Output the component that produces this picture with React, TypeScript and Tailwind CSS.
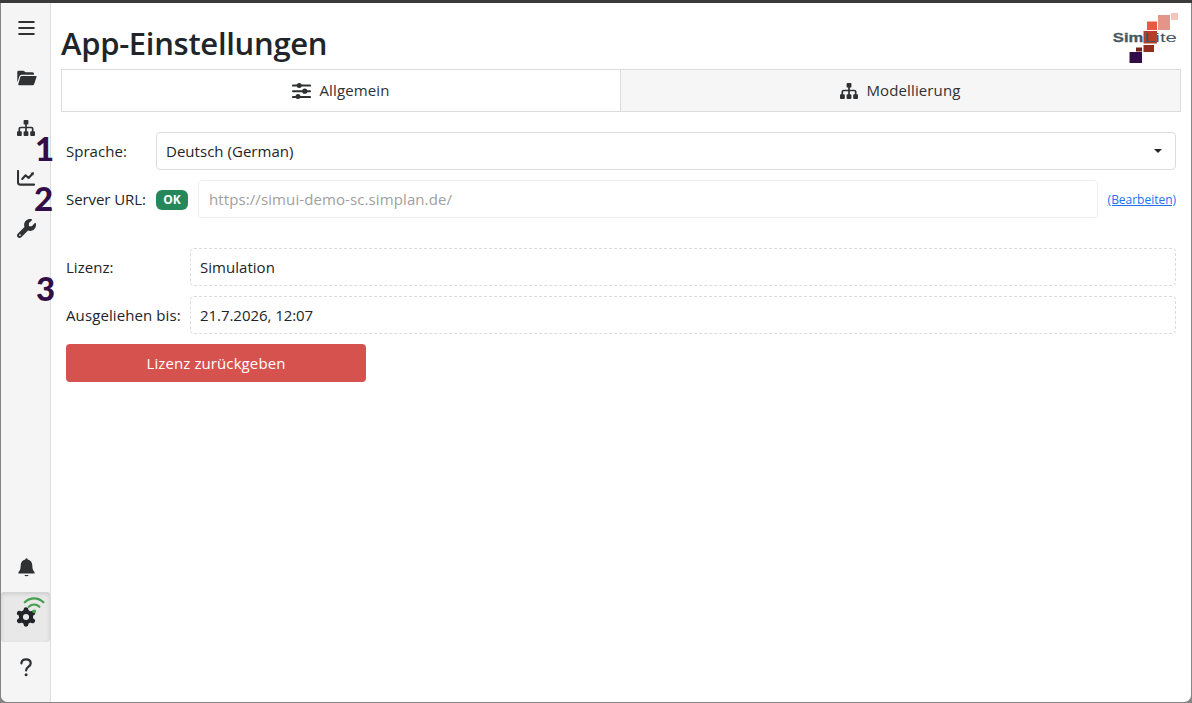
import React from "react";
import { FaWrench } from "react-icons/fa6";
import clsx from "clsx";

const SitemapIcon: React.FC = () => (
    <svg width="18" height="16" viewBox="0 0 18 16" fill="currentColor">
        <rect x="6.600" y="0" width="4.800" height="4.600" rx="0.900" />
        <rect x="0" y="11.200" width="4.800" height="4.800" rx="0.900" />
        <rect x="6.600" y="11.200" width="4.800" height="4.800" rx="0.900" />
        <rect x="13.200" y="11.200" width="4.800" height="4.800" rx="0.900" />
        <path d="M9 4v8M2.300 12V8.800q0-1.300 1.300-1.300h10.800q1.300 0 1.300 1.300V12" fill="none" stroke="currentColor" strokeWidth="1.700" />
    </svg>
);

const SlidersIcon: React.FC = () => (
    <svg width="19" height="16" viewBox="0 0 19 16" fill="currentColor">
        <path d="M1 2.500h17M1 8.200h17M1 14h17" stroke="currentColor" strokeWidth="2.100" strokeLinecap="round" />
        <circle cx="7.200" cy="2.500" r="2.500" />
        <circle cx="12.800" cy="8.200" r="2.600" />
        <circle cx="6" cy="13.500" r="2.500" />
    </svg>
);

const BarsIcon: React.FC = () => (
    <svg className="relative left-[0.5px]" width="17" height="14" viewBox="0 0 17 14" stroke="currentColor" strokeWidth="2" strokeLinecap="round">
        <path d="M1.200 1h14.600M1.200 7h14.600M1.200 13h14.600" />
    </svg>
);

const FolderIcon: React.FC = () => (
    <svg className="relative left-px" width="20" height="16" viewBox="0 0 20 16" fill="currentColor">
        <path d="M.300 12.500V2Q.300.700 1.600.700h4.600q.800 0 1.400.700l.900.900h7q1.500 0 1.500 1.500v1H4.600q-1.400 0-2 1.300z" />
        <path d="M4.600 6h14.200q1.100 0 .700 1.100l-2.300 6.900q-.400 1.200-1.600 1.200H2.200q-1.300 0-.900-1.200L3.300 7q.300-1 1.300-1z" />
    </svg>
);

const ChartIcon: React.FC = () => (
    <svg width="18" height="16" viewBox="0 0 18 16" fill="none" stroke="currentColor" strokeWidth="2.100" strokeLinecap="round" strokeLinejoin="round">
        <path d="M1 1v11.600q0 2 2 2h14" />
        <path d="M5.200 9l3.400-3.700 3 2.700 4.400-4.700" />
        <path d="M13.300 2.700h3v3z" fill="currentColor" stroke="none" />
    </svg>
);

const BellIcon: React.FC = () => (
    <svg className="relative left-[0.5px]" width="17" height="19" viewBox="0 0 17 19" fill="currentColor">
        <path d="M8.500.300q1 0 1.200 1.200c2.900.600 4.500 2.700 4.600 5.800.1 3.600.5 5.200 2.300 6.900v1.300H.400v-1.300c1.800-1.700 2.200-3.300 2.300-6.900.1-3.100 1.700-5.200 4.600-5.800Q7.500.300 8.500.300z" />
        <path d="M6.400 17h4.200q-.5 1.300-2.100 1.300T6.400 17z" />
    </svg>
);

const GearIcon: React.FC = () => (
    <svg width="20" height="20" viewBox="-10 -10 20 20" fill="none" stroke="currentColor">
        <circle r="5.100" strokeWidth="4.100" />
        <path
            d="M0-6v-1.200M0 6v1.200M5.200-3l1.400-.8M-5.200 3l-1.400.8M5.200 3l1.400.8M-5.200-3l-1.400-.8"
            strokeWidth="4.900"
            strokeLinecap="round"
        />
    </svg>
);

const QuestionIcon: React.FC = () => (
    <svg width="12" height="19" viewBox="0 0 12 19" fill="none">
        <path d="M1.400 5.300C1.600 2.800 3.400 1.400 6 1.400c2.800 0 4.700 1.500 4.700 4 0 3.200-4.600 3.300-4.600 7" stroke="currentColor" strokeWidth="2.200" strokeLinecap="round" />
        <circle cx="6.100" cy="16.800" r="1.500" fill="currentColor" />
    </svg>
);

const WifiBadge: React.FC = () => (
    <svg className="absolute top-[4px] left-[22px]" width="22" height="18" viewBox="0 0 22 18" fill="none" stroke="#43a04c" strokeWidth="2.200" strokeLinecap="round">
        <path d="M1.800 6.200C7.200 1 15.200 1 20.400 6.200" />
        <path d="M5.800 10.800C8.900 8 13.300 8 16.400 10.800" />
        <circle cx="11.200" cy="15.300" r="1.900" fill="#43a04c" stroke="none" />
    </svg>
);

const Logo: React.FC = () => (
    <svg width="68" height="52" viewBox="1112 12 68 52" role="img" aria-label="SimLite">
        <rect x="1171" y="13" width="7" height="7" fill="#f3c3bd" />
        <rect x="1158" y="15" width="12" height="15" fill="#e39589" />
        <rect x="1147" y="21.500" width="10" height="8.500" fill="#ea5840" />
        <rect x="1143.500" y="31" width="13.500" height="12.500" fill="#b83c28" />
        <rect x="1143.500" y="45" width="10.500" height="7" fill="#912c1e" />
        <rect x="1136" y="47.500" width="6" height="4" fill="#6e2219" />
        <rect x="1129.500" y="52" width="12.500" height="11" fill="#330d48" />
        <g fill="#465763" fontFamily="Liberation Sans, Arial, sans-serif" fontSize="13">
            <text x="1112.800" y="41.900" fontWeight="700" stroke="#465763" strokeWidth="0.300" textLength="30.500" lengthAdjust="spacingAndGlyphs">Sim</text>
            <text x="1144" y="41.900" textLength="33" lengthAdjust="spacingAndGlyphs">Lite</text>
        </g>
    </svg>
);

interface NavButtonProps {
    label: string;
    active?: boolean;
    children: React.ReactNode;
}

const NavButton: React.FC<NavButtonProps> = ({ label, active, children }) => (
    <button
        aria-label={label}
        className={clsx(
            "relative flex h-[50px] w-full items-center justify-center",
            active ? "rounded-[3px] bg-[#e8e8e8] text-[#212529] shadow-[inset_0_2px_4px_rgba(0,0,0,0.12)]" : "text-[#2f3133]"
        )}
    >
        {children}
    </button>
);

const Sidebar: React.FC = () => (
    <nav className="flex w-[50px] shrink-0 flex-col justify-between border-r border-[#dcdcdc] bg-[#f5f5f5] pb-[10px]">
        <div>
            <NavButton label="Menü"><BarsIcon /></NavButton>
            <NavButton label="Projekte"><FolderIcon /></NavButton>
            <NavButton label="Modelle"><SitemapIcon /></NavButton>
            <NavButton label="Auswertung"><ChartIcon /></NavButton>
            <NavButton label="Werkzeuge"><FaWrench className="relative left-[0.5px] text-[19px]" /></NavButton>
        </div>
        <div>
            <NavButton label="Meldungen"><BellIcon /></NavButton>
            <NavButton label="Einstellungen" active>
                <GearIcon />
                <WifiBadge />
            </NavButton>
            <NavButton label="Hilfe"><QuestionIcon /></NavButton>
        </div>
    </nav>
);

const App: React.FC = () => (
    <div className="h-[703px] w-[1192px] overflow-hidden bg-[#858585] font-['Open_Sans','Noto_Sans',sans-serif] text-[15px] tracking-[0.03px] text-[#212529]">
        <div className="h-[3px] bg-[#3a3a3a]" />
        <div className="relative mx-px flex h-[699px] overflow-hidden rounded-b-[7px] bg-white">
            <Sidebar />
            <main className="min-w-0 flex-1 px-[10px]">
                <header className="flex h-[66px] items-start justify-between">
                    <h1 className="pt-[16px] text-[31px] leading-[48px] font-semibold tracking-[-0.3px]">App-Einstellungen</h1>
                    <div className="pt-[9px] pr-px"><Logo /></div>
                </header>

                <div className="flex h-[43px] border border-[#dcdcdc] tracking-[0.13px]">
                    <button className="flex w-[558px] items-center justify-center gap-2 text-[#2f3133]">
                        <SlidersIcon />
                        <span className="pb-px">Allgemein</span>
                    </button>
                    <button className="flex flex-1 items-center justify-center gap-2 border-l border-[#dcdcdc] bg-[#f6f6f6] text-[#2f3133]">
                        <SitemapIcon />
                        <span className="pb-px">Modellierung</span>
                    </button>
                </div>

                <section className="px-[5px] pt-5">
                    <div className="flex h-[38px] items-center">
                        <label className="w-[90px] shrink-0">Sprache:</label>
                        <div className="flex h-full flex-1 items-center justify-between rounded-[4px] border border-[#dcdcdc] pr-[13px] pl-[9px]">
                            <span>Deutsch (German)</span>
                            <svg width="8" height="4" viewBox="0 0 8 4" fill="currentColor"><path d="M0 0h8L4 4z" /></svg>
                        </div>
                    </div>

                    <div className="mt-[10px] flex h-[38px] items-center">
                        <label className="w-[90px] shrink-0 tracking-[-0.07px] whitespace-nowrap">Server URL:</label>
                        <span className="mt-[2px] flex h-5 w-8 items-center justify-center rounded-[6px] bg-[#26875a] text-xs font-bold text-white">OK</span>
                        <div className="ml-[10px] flex h-full flex-1 items-center rounded-[4px] border border-[#ededed] pl-[10px] tracking-[0.1px] text-[#a0a0a0]">
                            https://simui-demo-sc.simplan.de/
                        </div>
                        <a className="mt-px ml-[10px] text-xs tracking-[-0.02px] whitespace-nowrap text-[#2270f0] underline" href="#">(Bearbeiten)</a>
                    </div>

                    <div className="mt-[30px] flex h-[38px] items-center">
                        <span className="w-[124px] shrink-0">Lizenz:</span>
                        <div className="flex h-full flex-1 items-center rounded-[4px] border border-dashed border-[#dcdcdc] pl-[9px]">Simulation</div>
                    </div>
                    <div className="mt-[10px] flex h-[38px] items-center">
                        <span className="w-[124px] shrink-0 tracking-[0.1px] whitespace-nowrap">Ausgeliehen bis:</span>
                        <div className="flex h-full flex-1 items-center rounded-[4px] border border-dashed border-[#dcdcdc] pl-[9px] tracking-[-0.05px]">21.7.2026, 12:07</div>
                    </div>
                    <button className="mt-[10px] h-[38px] w-[300px] rounded-[4px] bg-[#d6524f] tracking-[0.1px] text-white">Lizenz zurückgeben</button>
                </section>
            </main>

            {/* step markers over the sidebar edge */}
            <div className="font-['Lato','Open_Sans',sans-serif] text-[33px] leading-[44px] font-black text-[#330d48]">
                <span className="absolute top-[123px] left-[34px]">1</span>
                <span className="absolute top-[173px] left-[33px]">2</span>
                <span className="absolute top-[263px] left-[35px]">3</span>
            </div>
        </div>
    </div>
);

export default App;
